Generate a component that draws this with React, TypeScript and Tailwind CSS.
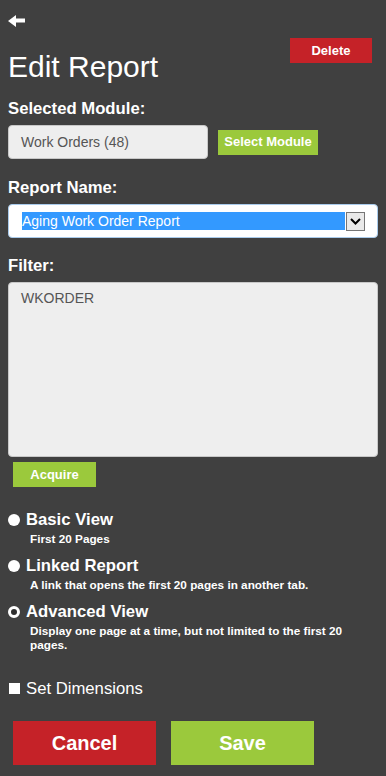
import React from "react";

const labelCls = "block text-[16.7px] leading-[19px] font-bold text-white";

function Radio({ checked }: { checked?: boolean }) {
    if (checked) {
        return <span className="inline-block h-[12px] w-[12px] rounded-full border-[3px] border-white bg-[#2e2e2e]"></span>;
    }
    return <span className="inline-block h-[12px] w-[12px] rounded-full bg-white"></span>;
}

function ViewOption({ title, desc, checked, className }: { title: string; desc: string; checked?: boolean; className?: string }) {
    return (
        <div className={className}>
            <div className="flex items-center gap-[6px]">
                <Radio checked={checked} />
                <span className="text-[16.7px] leading-[19px] font-bold">{title}</span>
            </div>
            <p className="mt-[3px] pl-[22px] text-[11.75px] leading-[14px] font-bold">{desc}</p>
        </div>
    );
}

export default function App() {
    return (
        <div className="min-h-screen bg-[#404040] px-2 font-['Liberation_Sans',Arial,sans-serif] text-white">
            {/* back arrow */}
            <div className="pt-[15px]">
                <svg width="17" height="12" viewBox="0 0 17 12" className="block">
                    <polygon points="0,6 8,0 8,3.5 17,3.5 17,7.5 8,7.5 8,12" fill="#ffffff" />
                </svg>
            </div>

            {/* title row */}
            <div className="mt-[11px] flex items-start justify-between">
                <h1 className="mt-[12px] text-[30px] leading-[34px] font-normal">Edit Report</h1>
                <button className="mr-[6px] h-[25px] w-[82px] bg-[#c52228] text-[13px] font-bold text-white">Delete</button>
            </div>

            <label className={`${labelCls} mt-[15px]`}>Selected Module:</label>
            <div className="mt-[7px] flex items-center gap-[10px]">
                <div className="flex h-[34px] w-[200px] items-center rounded-[4px] border border-[#c8c8c8] bg-[#eeeeee] pl-[12px] text-[14px] text-[#555555]">
                    Work Orders (48)
                </div>
                <button className="h-[25px] w-[100px] bg-[#9bc93c] text-[13px] font-bold text-white">Select Module</button>
            </div>

            <label className={`${labelCls} mt-[19px]`}>Report Name:</label>
            <div className="mt-[7px] flex h-[34px] items-center gap-[1px] rounded-[4px] border border-[#a9cbec] bg-white pl-[13px] pr-[12px]">
                <div className="flex h-[18px] flex-1 items-center bg-[#3399ff] text-[14px] leading-[18px] text-white">Aging Work Order Report</div>
                <div className="flex h-[19px] w-[19px] items-center justify-center border border-[#767676] bg-[#e9e9e9]">
                    <svg width="11" height="7" viewBox="0 0 11 7">
                        <path d="M1 1 L5.5 5.5 L10 1" stroke="#000" strokeWidth="2" fill="none" />
                    </svg>
                </div>
            </div>

            <label className={`${labelCls} mt-[18px]`}>Filter:</label>
            <div className="mt-[7px] h-[175px] rounded-[4px] border border-[#c8c8c8] bg-[#eeeeee] pl-[12px] pt-[7px] text-[14px] leading-[16px] text-[#555555]">
                WKORDER
            </div>
            <button className="ml-[5px] mt-[5px] h-[25px] w-[83px] bg-[#9bc93c] text-[13px] font-bold text-white">Acquire</button>

            {/* view options */}
            <div className="mt-[23px]">
                <ViewOption title="Basic View" desc="First 20 Pages" />
                <ViewOption className="mt-[10px]" title="Linked Report" desc="A link that opens the first 20 pages in another tab." />
                <ViewOption className="mt-[10px]" title="Advanced View" desc="Display one page at a time, but not limited to the first 20 pages." checked />
            </div>

            <div className="mt-[27px] flex items-center gap-[6px]">
                <span className="ml-[1px] inline-block h-[11px] w-[11px] bg-white"></span>
                <span className="text-[16.7px] leading-[19px]">Set Dimensions</span>
            </div>

            <div className="ml-[5px] mt-[23px] flex gap-[15px]">
                <button className="h-[44px] w-[143px] bg-[#c52228] text-[20px] font-bold text-white">Cancel</button>
                <button className="h-[44px] w-[143px] bg-[#9bc93c] text-[20px] font-bold text-white">Save</button>
            </div>
        </div>
    );
}
